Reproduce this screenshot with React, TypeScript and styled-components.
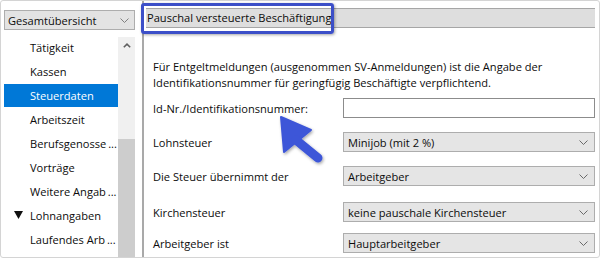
import React from "react"
import styled, { createGlobalStyle } from "styled-components"

const GlobalStyle = createGlobalStyle`
  html, body {
    margin: 0;
    padding: 0;
    background: #fff;
  }
  body {
    font-family: "Segoe UI", "Open Sans", "Noto Sans", sans-serif;
    font-size: 11.1px;
    color: #0c0c0c;
  }
`

const Frame = styled.div`
  position: relative;
  box-sizing: border-box;
  width: 600px;
  height: 258px;
  border: 1px solid #d4d4d4;
  border-radius: 3px;
  display: flex;
  overflow: hidden;
  background: #fff;
`

const Sidebar = styled.aside`
  box-sizing: border-box;
  width: 143px;
  flex: none;
  padding: 9px 0 0 3px;
  border-right: 2px solid #a9a9a9;
  display: flex;
  flex-direction: column;
`

const Combo = styled.div`
  box-sizing: border-box;
  width: 131px;
  height: 20px;
  border: 1px solid #adadad;
  background: #e3e3e3;
  display: flex;
  align-items: center;
  justify-content: space-between;
  padding: 0 5px 0 3px;
`

const ListArea = styled.div`
  display: flex;
  margin-top: 6px;
  flex: 1;
  min-height: 0;
`

const List = styled.ul`
  list-style: none;
  margin: 0;
  padding: 0;
  width: 114px;
`

const Item = styled.li<{ $selected?: boolean }>`
  box-sizing: border-box;
  height: 23px;
  margin-bottom: 1px;
  display: flex;
  align-items: center;
  padding-left: 26px;
  position: relative;
  white-space: nowrap;
  overflow: hidden;
  background: ${(p) => (p.$selected ? "#0078d7" : "transparent")};
  color: ${(p) => (p.$selected ? "#fff" : "#0c0c0c")};
`

const Caret = styled.svg`
  position: absolute;
  left: 10px;
  top: 7px;
`

const Scrollbar = styled.div`
  width: 17px;
  margin-top: 1px;
  background: #f0f0f0;
  display: flex;
  flex-direction: column;
  align-items: center;
`

const ScrollArrow = styled.svg`
  margin-top: 6px;
`

const Thumb = styled.div`
  margin-top: auto;
  width: 17px;
  height: 118px;
  background: #cdcdcd;
`

const Main = styled.section`
  flex: 1;
  min-width: 0;
  padding: 7px 4px 0 2px;
  display: flex;
  flex-direction: column;
`

const Header = styled.div`
  box-sizing: border-box;
  height: 20px;
  border-top: 1px solid #a6a6a6;
  border-bottom: 1px solid #a6a6a6;
  background: #dedede;
  padding-left: 1px;
  line-height: 18px;
`

const Body = styled.div`
  padding-left: 7px;
`

const Description = styled.p`
  margin: 31px 0 0;
  line-height: 16px;
`

const Row = styled.div<{ $gap: number }>`
  display: grid;
  grid-template-columns: 190px 252px;
  align-items: center;
  margin-top: ${(p) => p.$gap}px;
`

const Label = styled.span`
  white-space: nowrap;
`

const Input = styled.div`
  box-sizing: border-box;
  height: 20px;
  border: 1px solid #8c8c8c;
  background: #fff;
`

const Select = styled.div`
  box-sizing: border-box;
  height: 20px;
  border: 1px solid #adadad;
  background: #e5e5e5;
  display: flex;
  align-items: center;
  justify-content: space-between;
  padding: 0 6px 0 4px;
`

const Highlight = styled.div`
  position: absolute;
  left: 140px;
  top: 2px;
  box-sizing: border-box;
  width: 193px;
  height: 31px;
  border: 3px solid #3c4fc8;
  border-radius: 3px;
  box-shadow: 1px 1px 3px rgba(0, 0, 0, 0.35);
`

const Overlay = styled.svg`
  position: absolute;
  left: -1px;
  top: -1px;
  pointer-events: none;
`

const Chevron = ({ color = "#6a6a6a" }: { color?: string }) => (
  <svg width="9" height="5" viewBox="0 0 9 5">
    <path d="M0.5 0.5 L4.5 4.5 L8.5 0.5" fill="none" stroke={color} strokeWidth="1" />
  </svg>
)

const navItems = [
  { label: "Tätigkeit" },
  { label: "Kassen" },
  { label: "Steuerdaten", selected: true },
  { label: "Arbeitszeit" },
  { label: "Berufsgenosse\u2009..." },
  { label: "Vorträge" },
  { label: "Weitere Angab\u2009..." },
  { label: "Lohnangaben", group: true },
  { label: "Laufendes Arb\u2009..." },
]

const rows = [
  { label: "Id-Nr./Identifikationsnummer:", gap: 7 },
  { label: "Lohnsteuer", value: "Minijob (mit 2 %)", gap: 14 },
  { label: "Die Steuer übernimmt der", value: "Arbeitgeber", gap: 14 },
  { label: "Kirchensteuer", value: "keine pauschale Kirchensteuer", gap: 16 },
  { label: "Arbeitgeber ist", value: "Hauptarbeitgeber", gap: 11 },
]

export default function App() {
  return (
    <>
      <GlobalStyle />
      <Frame>
        <Sidebar>
          <Combo>
            <span>Gesamtübersicht</span>
            <Chevron color="#808080" />
          </Combo>
          <ListArea>
            <List>
              {navItems.map((item) => (
                <Item key={item.label} $selected={item.selected}>
                  {item.group && (
                    <Caret width="9" height="8" viewBox="0 0 9 8">
                      <path d="M0 0 H9 L4.5 8 Z" fill="#111" />
                    </Caret>
                  )}
                  {item.label}
                </Item>
              ))}
            </List>
            <Scrollbar>
              <ScrollArrow width="8" height="5" viewBox="0 0 8 5">
                <path d="M0.8 4.3 L4 1.2 L7.2 4.3" fill="none" stroke="#606060" strokeWidth="1.6" />
              </ScrollArrow>
              <Thumb />
            </Scrollbar>
          </ListArea>
        </Sidebar>
        <Main>
          <Header>Pauschal versteuerte Beschäftigung</Header>
          <Body>
            <Description>
              Für Entgeltmeldungen (ausgenommen SV-Anmeldungen) ist die Angabe der
              <br />
              Identifikationsnummer für geringfügig Beschäftigte verpflichtend.
            </Description>
            {rows.map((row) => (
              <Row key={row.label} $gap={row.gap}>
                <Label>{row.label}</Label>
                {row.value ? (
                  <Select>
                    <span>{row.value}</span>
                    <Chevron />
                  </Select>
                ) : (
                  <Input />
                )}
              </Row>
            ))}
          </Body>
        </Main>
        <Highlight />
        <Overlay width="600" height="258" viewBox="0 0 600 258">
          <defs>
            <filter id="arrowShadow" x="-20%" y="-20%" width="140%" height="140%">
              <feDropShadow dx="1" dy="1.5" stdDeviation="1.5" floodColor="#000" floodOpacity="0.35" />
            </filter>
          </defs>
          <g filter="url(#arrowShadow)" fill="#3d56d8" stroke="#3d56d8">
            <path d="M281 117 L284 152 L311 130 Z" strokeLinejoin="round" strokeWidth="2" />
            <line x1="296" y1="140" x2="318" y2="158" strokeWidth="9" strokeLinecap="round" />
          </g>
        </Overlay>
      </Frame>
    </>
  )
}
